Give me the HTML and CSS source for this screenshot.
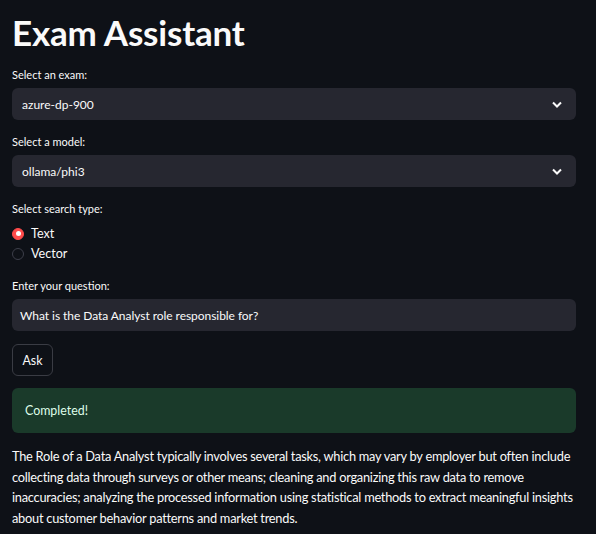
FILE: index.html
```html
<!DOCTYPE html>
<html>
<head>
<meta charset="utf-8">
<link rel="stylesheet" href="styles.css">
</head>
<body>
<main class="app">
  <h1 class="title">Exam Assistant</h1>

  <div class="widget">
    <div class="label">Select an exam:</div>
    <div class="select">
      <span>azure-dp-900</span>
      <svg class="chev" width="10" height="7" viewBox="0 0 10 7"><polyline points="1,1.5 5,5.5 9,1.5" fill="none" stroke="#fafafa" stroke-width="2"/></svg>
    </div>
  </div>

  <div class="widget">
    <div class="label">Select a model:</div>
    <div class="select">
      <span>ollama/phi3</span>
      <svg class="chev" width="10" height="7" viewBox="0 0 10 7"><polyline points="1,1.5 5,5.5 9,1.5" fill="none" stroke="#fafafa" stroke-width="2"/></svg>
    </div>
  </div>

  <div class="widget">
    <div class="label radio-label">Select search type:</div>
    <div class="radio-row"><span class="dot checked"></span><span>Text</span></div>
    <div class="radio-row last"><span class="dot"></span><span>Vector</span></div>
  </div>

  <div class="widget">
    <div class="label">Enter your question:</div>
    <div class="input">What is the Data Analyst role responsible for?</div>
  </div>

  <div class="widget button-row">
    <button class="btn">Ask</button>
  </div>

  <div class="success">Completed!</div>

  <p class="answer">The Role of a Data Analyst typically involves several tasks, which may vary by employer but often include collecting data through surveys or other means; cleaning and organizing this raw data to remove inaccuracies; analyzing the processed information using statistical methods to extract meaningful insights about customer behavior patterns and market trends.</p>
</main>
</body>
</html>
```

FILE: styles.css
```css
html, body {
  margin: 0;
  padding: 0;
  background: #0e1117;
  color: #fafafa;
  font-family: Lato, "Open Sans", sans-serif;
  height: 100%;
  overflow: hidden;
}

.app {
  display: flex;
  flex-direction: column;
  gap: 13px;
  padding: 0 20px 0 12px;
}

.title {
  margin: 0;
  height: 53px;
  font-size: 35px;
  font-weight: 700;
  line-height: 64px;
  letter-spacing: -0.2px;
}

.widget {
  display: flex;
  flex-direction: column;
}

.button-row {
  margin-bottom: -1px;
}

.label {
  font-size: 11px;
  line-height: 18px;
  height: 18px;
  margin-bottom: 4px;
  color: #fafafa;
}

.radio-label {
  margin-bottom: 5px;
}

.select {
  height: 32px;
  background: #262730;
  border-radius: 6px;
  display: flex;
  align-items: center;
  justify-content: space-between;
  padding: 0 14px 0 10px;
  font-size: 12px;
}

.chev {
  display: block;
}

.radio-row {
  height: 21px;
  display: flex;
  align-items: center;
  gap: 7px;
  font-size: 12.6px;
}

.radio-row.last {
  height: 20px;
  align-items: flex-start;
  padding-top: 4px;
  box-sizing: border-box;
}

.radio-row.last .dot {
  margin-top: 0;
}

.radio-row.last span:last-child {
  line-height: 13px;
  margin-top: -1px;
}

.dot {
  width: 12px;
  height: 12px;
  border-radius: 50%;
  box-sizing: border-box;
  border: 1px solid #3d3f4a;
  background: #0e1117;
  flex: none;
  display: flex;
  align-items: center;
  justify-content: center;
}

.dot.checked {
  background: #ff4b4b;
  border-color: #ff4b4b;
}

.dot.checked::after {
  content: "";
  width: 5px;
  height: 5px;
  border-radius: 50%;
  background: #ffffff;
}

.input {
  height: 32px;
  background: #262730;
  border-radius: 6px;
  display: flex;
  align-items: center;
  padding: 0 8px;
  font-size: 12px;
  letter-spacing: -0.05px;
}

.btn {
  align-self: flex-start;
  height: 32px;
  width: 41px;
  background: #0e1117;
  color: #fafafa;
  border: 1px solid #3a3c44;
  border-radius: 6px;
  font-family: inherit;
  font-size: 12.4px;
  padding: 0;
}

.success {
  height: 45px;
  box-sizing: border-box;
  background: #1a3a2a;
  border-radius: 6px;
  padding: 0 13px;
  display: flex;
  align-items: center;
  color: #dffde9;
  font-size: 12.4px;
}

.answer {
  margin: 0 -14px 0 0;
  font-size: 12.8px;
  line-height: 20.5px;
  letter-spacing: -0.25px;
}
```
